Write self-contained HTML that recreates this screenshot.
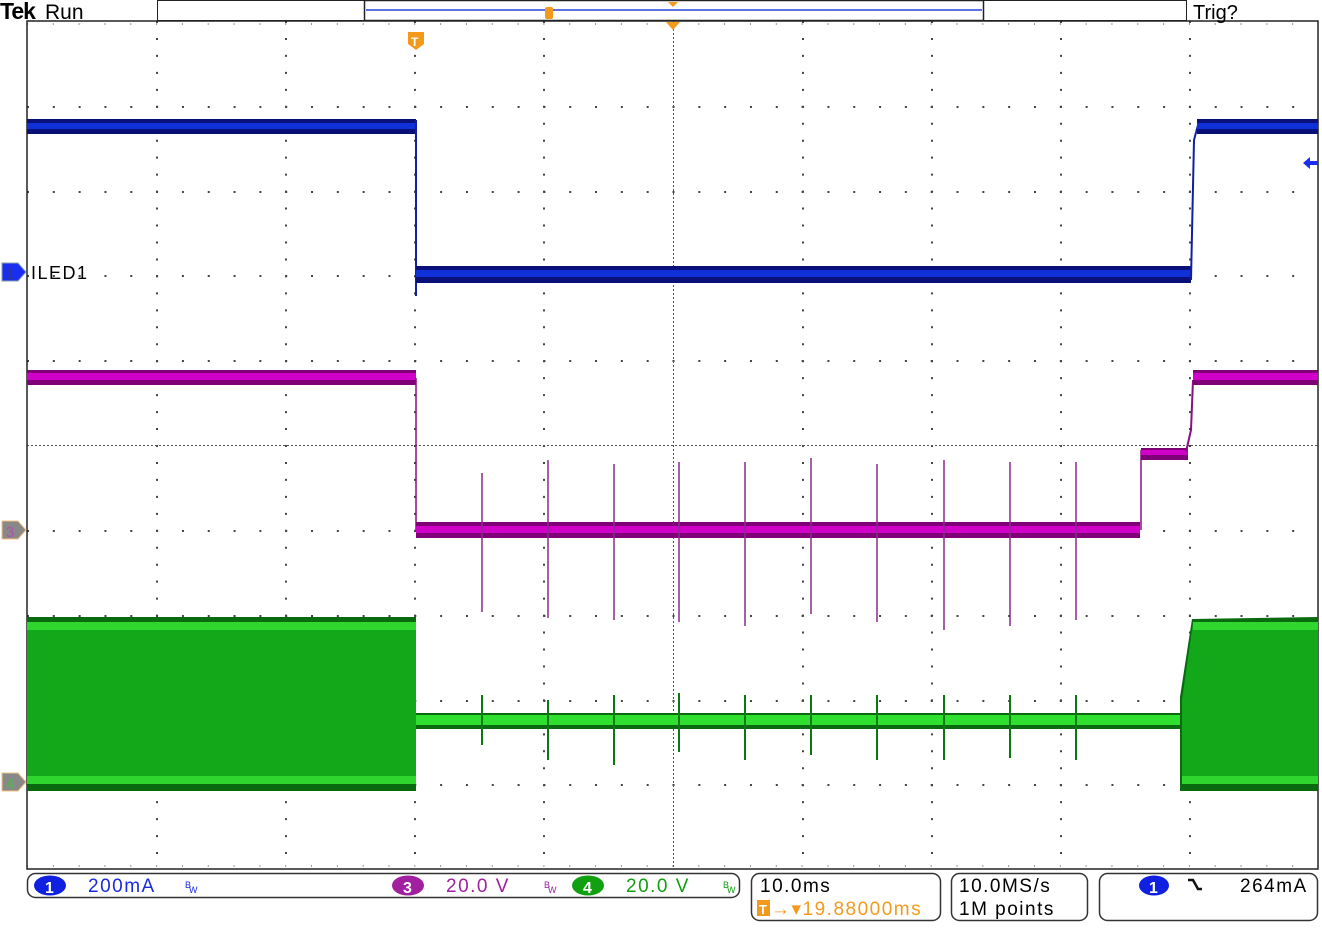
<!DOCTYPE html>
<html><head><meta charset="utf-8"><style>
html,body{margin:0;padding:0;background:#fff;width:1322px;height:938px;overflow:hidden}
svg{display:block}
text{font-family:"Liberation Sans",sans-serif}
.r{font-size:19px;letter-spacing:1.5px}
</style></head><body>
<svg width="1322" height="938" viewBox="0 0 1322 938" xmlns="http://www.w3.org/2000/svg">
<!-- graticule -->
<g stroke="#444" stroke-width="2" stroke-dasharray="2 23.82">
<line x1="27" y1="107" x2="1318" y2="107"/>
<line x1="27" y1="192" x2="1318" y2="192"/>
<line x1="27" y1="276" x2="1318" y2="276"/>
<line x1="27" y1="361" x2="1318" y2="361"/>
<line x1="27" y1="531" x2="1318" y2="531"/>
<line x1="27" y1="616" x2="1318" y2="616"/>
<line x1="27" y1="701" x2="1318" y2="701"/>
<line x1="27" y1="785" x2="1318" y2="785"/>
</g>
<g stroke="#444" stroke-width="2" stroke-dasharray="2 14.96">
<line x1="157" y1="21" x2="157" y2="869"/>
<line x1="286" y1="21" x2="286" y2="869"/>
<line x1="415" y1="21" x2="415" y2="869"/>
<line x1="544" y1="21" x2="544" y2="869"/>
<line x1="803" y1="21" x2="803" y2="869"/>
<line x1="932" y1="21" x2="932" y2="869"/>
<line x1="1061" y1="21" x2="1061" y2="869"/>
<line x1="1190" y1="21" x2="1190" y2="869"/>
</g>
<line x1="27" y1="445.5" x2="1318" y2="445.5" stroke="#555" stroke-dasharray="2,2"/>
<line x1="673.5" y1="21" x2="673.5" y2="869" stroke="#555" stroke-dasharray="2,2"/>
<g stroke="#333" stroke-width="1">
<line x1="27" y1="24" x2="1318" y2="24" stroke-dasharray="1 24.82"/>
<line x1="27" y1="866" x2="1318" y2="866" stroke-dasharray="1 24.82"/>
</g>
<rect x="27" y="21" width="1291" height="848" fill="none" stroke="#222" stroke-width="1.5"/>
<!-- top bar -->
<text x="0" y="19" font-size="23" font-weight="bold" font-family="Liberation Serif" letter-spacing="-1">Tek</text>
<text x="45" y="19" font-size="21">Run</text>
<rect x="157.5" y="0.5" width="1029" height="20" fill="#fff" stroke="#222"/>
<rect x="364.5" y="0.5" width="619" height="20" fill="#fff" stroke="#222" stroke-width="1.5"/>
<line x1="366" y1="10" x2="982" y2="10" stroke="#2840e0" stroke-width="1.5"/>
<rect x="545" y="7" width="8" height="12" rx="2" fill="#f39a1c"/>
<path d="M668 2h10l-5 5z" fill="#f39a1c"/>
<text x="1193" y="19" font-size="20">Trig?</text>
<path d="M666 22h14l-7 8z" fill="#f39a1c"/>
<path d="M408 32h16v12l-8 6-8-6z" fill="#f39a1c"/><text x="411" y="46" font-size="12" fill="#fff" font-weight="bold">T</text>
<!-- blue ch1 -->
<g>
<rect x="27" y="119" width="389" height="15" fill="#0a107a"/><rect x="27" y="123" width="389" height="6" fill="#1030d8"/>
<line x1="416" y1="120" x2="416" y2="296" stroke="#1020a0" stroke-width="2"/>
<rect x="416" y="266" width="775" height="17" fill="#0a107a"/><rect x="416" y="270" width="775" height="7" fill="#1030d8"/>
<path d="M1191 280 L1194 140 L1198 125" stroke="#1020a0" stroke-width="2" fill="none"/>
<rect x="1197" y="119" width="121" height="15" fill="#0a107a"/><rect x="1197" y="123" width="121" height="6" fill="#1030d8"/>
</g>
<!-- magenta ch3 -->
<g>
<rect x="27" y="370" width="389" height="15" fill="#800078"/><rect x="27" y="373" width="389" height="7" fill="#d000c8"/>
<line x1="416" y1="378" x2="416" y2="530" stroke="#8a1080" stroke-width="1.5"/>
<rect x="416" y="522" width="724" height="16" fill="#800078"/><rect x="416" y="526" width="724" height="7" fill="#d000c8"/>
<line x1="1141" y1="450" x2="1141" y2="530" stroke="#8a1080" stroke-width="1.5"/>
<rect x="1141" y="448" width="47" height="12" fill="#800078"/><rect x="1141" y="450" width="47" height="5" fill="#d000c8"/>
<path d="M1186 452 L1191 430 L1193 380" stroke="#8a1080" stroke-width="2" fill="none"/>
<rect x="1193" y="370" width="125" height="15" fill="#800078"/><rect x="1193" y="373" width="125" height="7" fill="#d000c8"/>
<g stroke="#8a2a8a" stroke-width="1.5">
<line x1="482" y1="473" x2="482" y2="612"/><line x1="548" y1="460" x2="548" y2="618"/><line x1="614" y1="464" x2="614" y2="620"/><line x1="679" y1="462" x2="679" y2="622"/><line x1="745" y1="462" x2="745" y2="626"/><line x1="811" y1="458" x2="811" y2="614"/><line x1="877" y1="464" x2="877" y2="622"/><line x1="944" y1="460" x2="944" y2="630"/><line x1="1010" y1="462" x2="1010" y2="626"/><line x1="1076" y1="462" x2="1076" y2="620"/>
</g>
</g>
<!-- green ch4 -->
<g>
<rect x="27" y="617" width="389" height="174" fill="#0a6a10"/><rect x="27" y="622" width="389" height="162" fill="#12a81a"/>
<rect x="27" y="622" width="389" height="8" fill="#2ed62e"/><rect x="27" y="776" width="389" height="8" fill="#2ed62e"/>
<rect x="416" y="713" width="764" height="16" fill="#0a6a10"/><rect x="416" y="715" width="764" height="10" fill="#30e030"/>
<g stroke="#0a7a10" stroke-width="2">
<line x1="482" y1="695" x2="482" y2="745"/><line x1="548" y1="700" x2="548" y2="760"/><line x1="614" y1="695" x2="614" y2="765"/><line x1="679" y1="693" x2="679" y2="752"/><line x1="745" y1="695" x2="745" y2="760"/><line x1="811" y1="695" x2="811" y2="755"/><line x1="877" y1="695" x2="877" y2="760"/><line x1="944" y1="695" x2="944" y2="760"/><line x1="1010" y1="695" x2="1010" y2="758"/><line x1="1076" y1="695" x2="1076" y2="760"/>
</g>
<path d="M1180 697 L1192 619 L1318 617 L1318 791 L1180 791 Z" fill="#0a6a10"/>
<path d="M1182 700 L1193 623 L1318 622 L1318 784 L1182 784 Z" fill="#12a81a"/>
<rect x="1193" y="622" width="125" height="8" fill="#2ed62e"/><rect x="1182" y="776" width="136" height="8" fill="#2ed62e"/>
</g>
<!-- channel markers -->
<path d="M2 263h16l8 9-8 9H2z" fill="#1a2ef0" stroke="#8aa0b0"/><text x="6" y="279" font-size="15" fill="#2a3a90">1</text>
<text x="31" y="279" font-size="18" letter-spacing="1.5">ILED1</text>
<path d="M2 521h16l8 9-8 9H2z" fill="#888" stroke="#f0c080"/><text x="6" y="537" font-size="15" fill="#b050b0">3</text>
<path d="M2 773h16l8 9-8 9H2z" fill="#888" stroke="#f0c080"/><text x="6" y="789" font-size="15" fill="#40c040">4</text>
<path d="M1303 163l7-6v4h8v4h-8v4z" fill="#1a2ef0"/>
<!-- bottom readouts -->
<rect x="27.5" y="873.5" width="712" height="24" rx="8" fill="#fff" stroke="#333" stroke-width="1.5"/>
<ellipse cx="50" cy="885.5" rx="16" ry="10" fill="#1020e0"/><text x="45" y="893" font-size="16" fill="#fff" font-weight="bold">1</text>
<text x="88" y="892" class="r" fill="#1a2ae0">200mA</text>
<text x="185" y="888" font-size="9" fill="#1a2ae0">B</text><text x="189" y="893" font-size="9" fill="#1a2ae0">W</text>
<ellipse cx="408" cy="885.5" rx="16" ry="10" fill="#a020a0"/><text x="403" y="893" font-size="16" fill="#fff" font-weight="bold">3</text>
<text x="446" y="892" class="r" fill="#a020a0">20.0 V</text>
<text x="544" y="888" font-size="9" fill="#a020a0">B</text><text x="548" y="893" font-size="9" fill="#a020a0">W</text>
<ellipse cx="588" cy="885.5" rx="16" ry="10" fill="#10a010"/><text x="583" y="893" font-size="16" fill="#fff" font-weight="bold">4</text>
<text x="626" y="892" class="r" fill="#10a010">20.0 V</text>
<text x="723" y="888" font-size="9" fill="#10a010">B</text><text x="727" y="893" font-size="9" fill="#10a010">W</text>
<rect x="751.5" y="873.5" width="189" height="47" rx="8" fill="#fff" stroke="#333" stroke-width="1.5"/>
<text x="760" y="892" class="r">10.0ms</text>
<rect x="757" y="900" width="13" height="16" fill="#f39a1c"/><text x="759" y="914" font-size="13" fill="#fff" font-weight="bold">T</text>
<text x="771" y="915" class="r" fill="#f39a1c" letter-spacing="1">→▾19.88000ms</text>
<rect x="951.5" y="873.5" width="136" height="47" rx="8" fill="#fff" stroke="#333" stroke-width="1.5"/>
<text x="959" y="892" class="r">10.0MS/s</text>
<text x="959" y="915" class="r">1M points</text>
<rect x="1099.5" y="873.5" width="218" height="47" rx="8" fill="#fff" stroke="#333" stroke-width="1.5"/>
<ellipse cx="1154" cy="885.5" rx="15" ry="10" fill="#1020e0"/><text x="1149" y="893" font-size="16" fill="#fff" font-weight="bold">1</text>
<path d="M1188 880h5l5 9h4" stroke="#111" stroke-width="2.5" fill="none"/>
<text x="1240" y="892" class="r">264mA</text>
</svg>
</body></html>
